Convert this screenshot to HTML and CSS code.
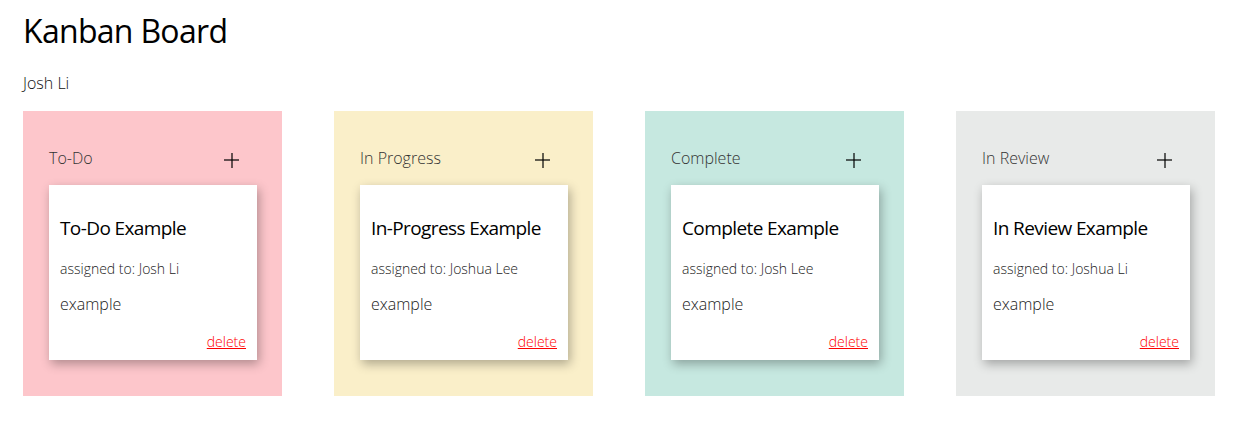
FILE: index.html
```html
<!DOCTYPE html>
<html>
<head>
<meta charset="utf-8">
<link rel="stylesheet" href="styles.css">
</head>
<body>
<h1 class="title">Kanban Board</h1>
<p class="user">Josh Li</p>
<div class="board">
  <section class="column col-todo">
    <div class="col-head"><span class="col-name">To-Do</span><span class="plus"></span></div>
    <div class="card">
      <h2 class="card-title">To-Do Example</h2>
      <p class="assigned">assigned to: Josh Li</p>
      <p class="desc">example</p>
      <div class="card-foot"><a class="delete" href="#">delete</a></div>
    </div>
  </section>
  <section class="column col-progress">
    <div class="col-head"><span class="col-name">In Progress</span><span class="plus"></span></div>
    <div class="card">
      <h2 class="card-title">In-Progress Example</h2>
      <p class="assigned">assigned to: Joshua Lee</p>
      <p class="desc">example</p>
      <div class="card-foot"><a class="delete" href="#">delete</a></div>
    </div>
  </section>
  <section class="column col-complete">
    <div class="col-head"><span class="col-name">Complete</span><span class="plus"></span></div>
    <div class="card">
      <h2 class="card-title">Complete Example</h2>
      <p class="assigned">assigned to: Josh Lee</p>
      <p class="desc">example</p>
      <div class="card-foot"><a class="delete" href="#">delete</a></div>
    </div>
  </section>
  <section class="column col-review">
    <div class="col-head"><span class="col-name">In Review</span><span class="plus"></span></div>
    <div class="card">
      <h2 class="card-title">In Review Example</h2>
      <p class="assigned">assigned to: Joshua Li</p>
      <p class="desc">example</p>
      <div class="card-foot"><a class="delete" href="#">delete</a></div>
    </div>
  </section>
</div>
</body>
</html>
```
FILE: styles.css
```css
html, body {
  margin: 0;
  padding: 0;
  background: #fff;
}
body {
  font-family: "Open Sans", "Noto Sans", sans-serif;
  color: #000;
  padding: 0 23px;
}
.title {
  font-size: 32px;
  font-weight: 400;
  line-height: 44px;
  letter-spacing: -0.7px;
  margin: 9px 0 0 0;
}
.user {
  font-size: 16px;
  font-weight: 300;
  line-height: 22px;
  margin: 19px 0 0 0;
  color: #111;
}
.board {
  display: grid;
  grid-template-columns: repeat(4, 259px);
  column-gap: 52px;
  margin-top: 17px;
}
.column {
  height: 285px;
  box-sizing: border-box;
  padding: 36px 25px 0 26px;
}
.col-todo { background: #fdc6cb; }
.col-progress { background: #faefc9; }
.col-complete { background: #c6e8e0; }
.col-review { background: #e8eae9; }
.col-head {
  display: flex;
  align-items: center;
  justify-content: space-between;
  height: 22px;
  padding-right: 18px;
  margin-bottom: 16px;
}
.col-name {
  font-size: 16px;
  font-weight: 300;
  color: #333;
  line-height: 22px;
}
.plus {
  position: relative;
  width: 15px;
  height: 15px;
  margin-top: 4px;
}
.plus::before, .plus::after {
  content: "";
  position: absolute;
  background: rgba(0, 0, 0, 0.6);
}
.plus::before {
  left: 0;
  right: 0;
  top: 6.5px;
  height: 2px;
}
.plus::after {
  top: 0;
  bottom: 0;
  left: 6.5px;
  width: 2px;
}
.card {
  background: #fff;
  height: 175px;
  box-sizing: border-box;
  padding: 29px 11px 0 11px;
  box-shadow: 2px 4px 10px rgba(0, 0, 0, 0.3);
  display: flex;
  flex-direction: column;
}
.card-title {
  font-size: 19px;
  font-weight: 400;
  line-height: 28px;
  letter-spacing: -0.6px;
  margin: 0;
  white-space: nowrap;
}
.assigned {
  font-size: 14px;
  font-weight: 300;
  line-height: 19px;
  margin: 17px 0 0 0;
  color: #222;
}
.desc {
  font-size: 16px;
  font-weight: 300;
  line-height: 22px;
  margin: 15px 0 0 0;
  color: #222;
}
.card-foot {
  display: flex;
  justify-content: flex-end;
  margin-top: 17px;
}
.delete {
  font-size: 14px;
  font-weight: 300;
  line-height: 19px;
  color: #ff0000;
  text-decoration: underline;
}
```
